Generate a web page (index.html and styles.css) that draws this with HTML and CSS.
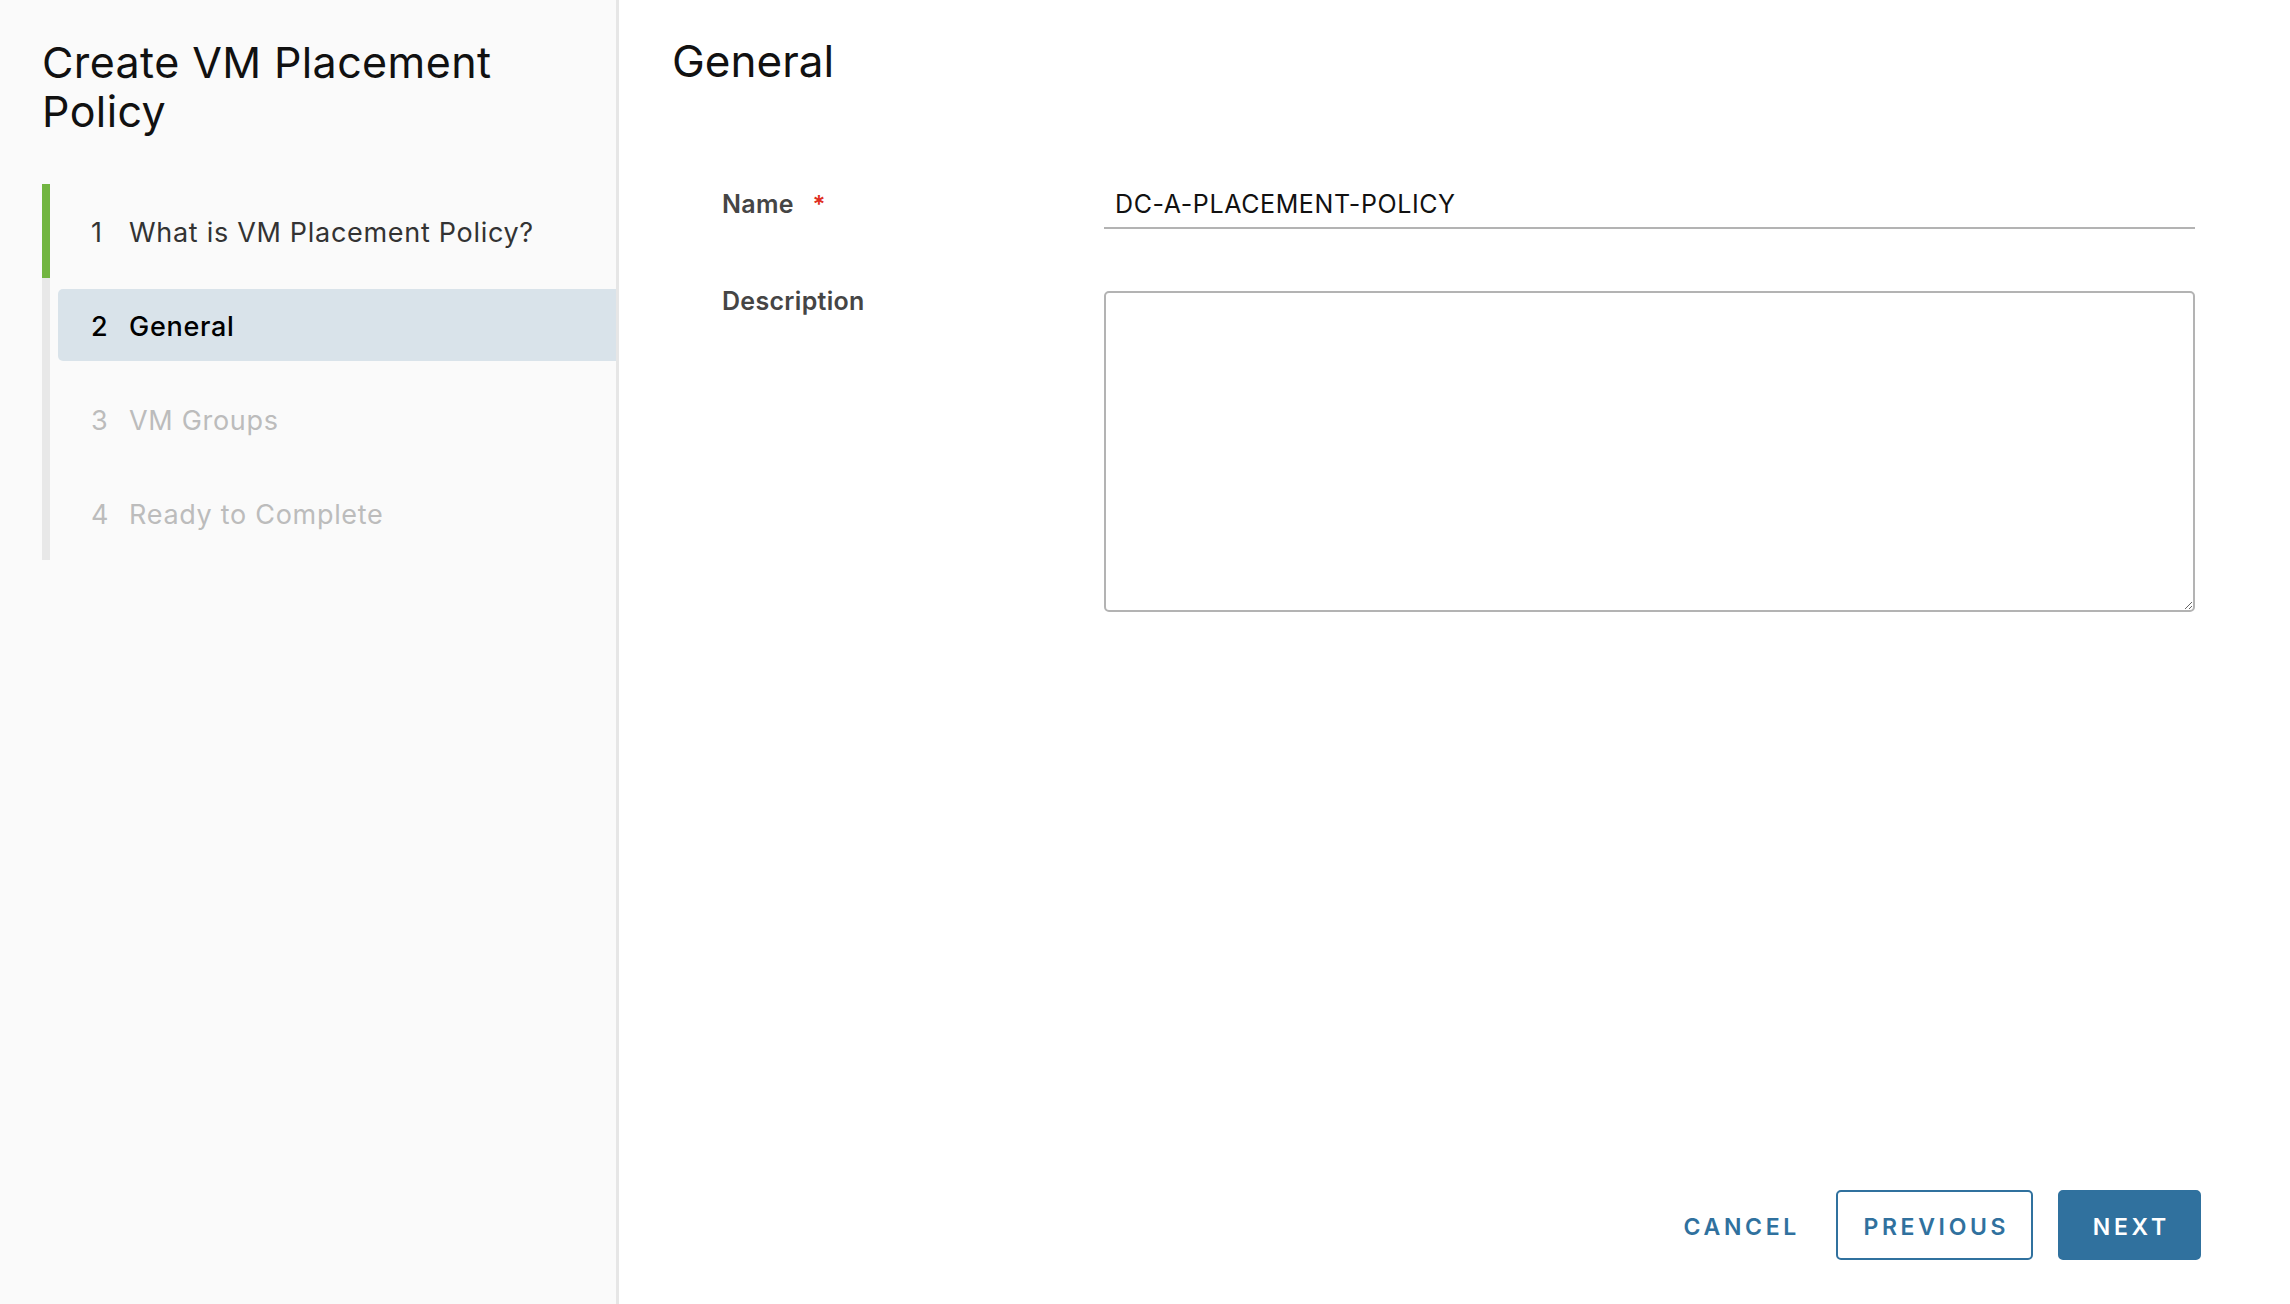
FILE: index.html
```html
<!DOCTYPE html>
<html lang="en">
<head>
<meta charset="utf-8">
<title>Create VM Placement Policy</title>
<link rel="stylesheet" href="styles.css">
</head>
<body>
<div class="wizard">
  <aside class="sidebar">
    <h1 class="wizard-title">Create VM Placement Policy</h1>
    <ol class="steps">
      <li class="step step-done"><div class="step-box"><span class="step-num">1</span><span class="step-label">What is VM Placement Policy?</span></div></li>
      <li class="step step-current"><div class="step-box"><span class="step-num">2</span><span class="step-label">General</span></div></li>
      <li class="step step-todo"><div class="step-box"><span class="step-num">3</span><span class="step-label">VM Groups</span></div></li>
      <li class="step step-todo"><div class="step-box"><span class="step-num">4</span><span class="step-label">Ready to Complete</span></div></li>
    </ol>
  </aside>
  <main class="content">
    <h2 class="page-title">General</h2>
    <form class="form">
      <label class="form-label label-name" for="name">Name <span class="required">*</span></label>
      <input class="text-input" id="name" type="text" value="DC-A-PLACEMENT-POLICY">
      <label class="form-label label-desc" for="desc">Description</label>
      <textarea class="text-area" id="desc"></textarea>
    </form>
    <div class="footer">
      <button class="btn btn-link" type="button">CANCEL</button>
      <button class="btn btn-outline" type="button">PREVIOUS</button>
      <button class="btn btn-primary" type="button">NEXT</button>
    </div>
  </main>
</div>
</body>
</html>
```

FILE: styles.css
```css
html, body {
  margin: 0;
  padding: 0;
  height: 100%;
}

body {
  font-family: "Inter", "Noto Sans", "Liberation Sans", sans-serif;
  background: #ffffff;
  color: #000;
}

.wizard {
  display: flex;
  height: 1304px;
}

.sidebar {
  width: 619px;
  flex: 0 0 619px;
  background: #fafafa;
  border-right: 3px solid #e6e6e6;
  padding-left: 42px;
  box-sizing: border-box;
}

.wizard-title {
  margin: 38px 0 0 0;
  padding-right: 60px;
  font-size: 43px;
  line-height: 49px;
  font-weight: 400;
  color: #111;
  letter-spacing: 0.4px;
}

.steps {
  list-style: none;
  margin: 48px 0 0 0;
  padding: 0;
}

.step {
  height: 94px;
  border-left: 8px solid #e8e8e8;
  padding-left: 8px;
  display: flex;
  align-items: center;
  box-sizing: border-box;
}

.step-done {
  border-left-color: #72b541;
}

.step-box {
  flex: 1;
  height: 72px;
  display: flex;
  align-items: center;
  padding-left: 33px;
  padding-top: 2px;
  box-sizing: border-box;
  border-radius: 5px 0 0 5px;
  font-size: 27px;
  letter-spacing: 0.7px;
  color: #333;
}

.step-num {
  width: 38px;
  flex: 0 0 38px;
}

.step-current .step-box {
  background: #d9e3ea;
  color: #000;
  font-weight: 500;
}

.step-todo .step-box {
  color: #bcbcbc;
}

.content {
  flex: 1;
  display: flex;
  flex-direction: column;
  padding: 35px 95px 44px 53px;
  box-sizing: border-box;
}

.page-title {
  margin: 0;
  font-size: 44px;
  line-height: 52px;
  font-weight: 400;
  color: #111;
}

.form {
  margin: 98px 0 0 50px;
  display: grid;
  grid-template-columns: 382px 1fr;
  row-gap: 62px;
}

.form-label {
  font-size: 25px;
  line-height: 20px;
  font-weight: 600;
  letter-spacing: 0.3px;
  color: #454545;
}

.label-name {
  padding-top: 9px;
}

.required {
  color: #e0301e;
  margin-left: 12px;
  font-size: 24px;
}

.text-input {
  height: 44px;
  box-sizing: border-box;
  border: none;
  border-bottom: 2px solid #b3b3b3;
  padding: 0 0 4px 11px;
  font-family: inherit;
  font-size: 25px;
  letter-spacing: 0.6px;
  color: #111;
  background: transparent;
  outline: none;
}

.text-area {
  height: 321px;
  box-sizing: border-box;
  border: 2px solid #b3b3b3;
  border-radius: 5px;
  font-family: inherit;
  font-size: 25px;
  resize: vertical;
  background: #fff;
}

.footer {
  margin-top: auto;
  display: flex;
  justify-content: flex-end;
  align-items: center;
  gap: 25px;
  margin-right: -6px;
}

.btn {
  height: 70px;
  box-sizing: border-box;
  border-radius: 5px;
  font-family: inherit;
  font-size: 23px;
  font-weight: 600;
  letter-spacing: 0.16em;
  padding: 3px 0 0 0.16em;
  border: 2px solid transparent;
  cursor: pointer;
}

.btn-link {
  background: transparent;
  color: #30719e;
  padding-left: 30px;
  padding-right: 10px;
  margin-right: -1px;
}

.btn-outline {
  background: #fff;
  border-color: #30719e;
  color: #30719e;
  width: 197px;
}

.btn-primary {
  background: #30719e;
  border-color: #30719e;
  color: #fff;
  width: 143px;
}
```
